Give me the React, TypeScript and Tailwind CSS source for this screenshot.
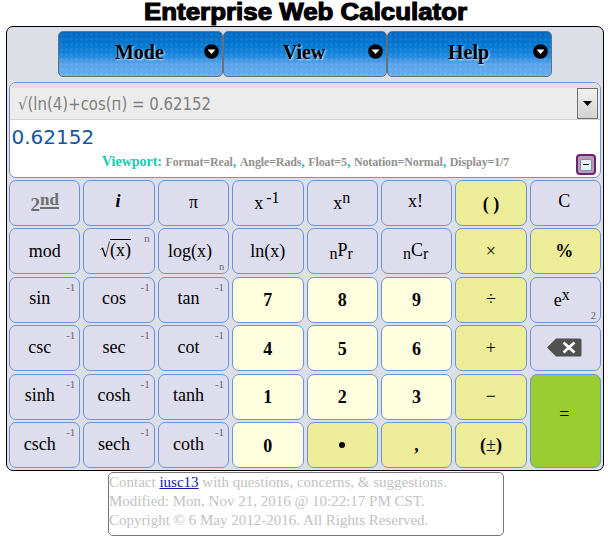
import { Fragment, type ReactNode } from "react";

type Tone = "func" | "digit" | "op" | "equals";

interface KeyDef {
  id: string;
  label: ReactNode;
  tone?: Tone;
  pad?: string;
  sup?: string;
  sub?: string;
}

const tones: Record<Tone, string> = {
  func: "bg-[#dddded]",
  digit: "bg-[#ffffdf] font-bold",
  op: "bg-[#eded99] font-bold",
  equals: "bg-[#9acd32] row-span-2",
};

const trig = (name: string): KeyDef => ({ id: name, label: name, sup: "-1", pad: "pr-[10px] pb-[3px]" });
const digit = (n: string): KeyDef => ({ id: n, label: n, tone: "digit", pad: "pt-px" });
const op = (id: string, sign: string): KeyDef => ({ id, label: <span className="font-normal">{sign}</span>, tone: "op", pad: "pb-px" });

const keys: KeyDef[] = [
  {
    id: "second",
    label: (
      <span className="flex font-bold text-[#6f6f6f]">
        <span className="pt-[3px] text-[19px]">2</span>
        <span className="h-[16px] border-b-2 border-[#6f6f6f] text-[17px] leading-[14px]">nd</span>
      </span>
    ),
    pad: "pt-px",
  },
  { id: "i", label: <b className="italic">i</b>, pad: "pr-[2px] pb-[3px]" },
  { id: "pi", label: "π", pad: "pb-[2px]" },
  { id: "inverse", label: <span className="flex">x<span className="-mt-[5px] pl-[3px] text-[16px]">-1</span></span>, pad: "pt-px pr-[2px]" },
  { id: "power", label: <span className="flex">x<span className="-mt-[5px] text-[16px]">n</span></span>, pad: "pr-px" },
  { id: "factorial", label: "x!", pad: "pb-[4px] pr-[2px]" },
  { id: "parens", label: "( )", tone: "op", pad: "pt-[3px]" },
  { id: "clear", label: "C", pad: "pb-[4px] pr-[2px]" },
  { id: "mod", label: "mod", pad: "pb-px" },
  {
    id: "root",
    label: (
      <span className="flex h-[18px] items-end">
        <svg className="h-[17px] w-[10px]" viewBox="0 0 10 17" fill="none" stroke="black">
          <path d="M0.5 8.5 2.5 7" strokeWidth="0.9" />
          <path d="m2.5 7 3 9" strokeWidth="1.3" />
          <path d="m5.5 16 4-15.500" strokeWidth="0.7" />
        </svg>
        <span className="h-[19px] border-t border-black leading-[20px]">(x)</span>
      </span>
    ),
    sup: "n",
    pad: "pr-[7px] pb-[4px]",
  },
  { id: "log", label: "log(x)", sub: "n", pad: "pr-[7px] pb-px" },
  { id: "ln", label: "ln(x)", pad: "pb-px" },
  { id: "npr", label: <span className="flex"><span className="pt-[4px] text-[16px]">n</span>P<span className="pt-[4px] text-[16px]">r</span></span>, pad: "pr-[2px] pt-[2px]" },
  { id: "ncr", label: <span className="flex"><span className="pt-[4px] text-[16px]">n</span>C<span className="pt-[4px] text-[16px]">r</span></span>, pad: "pr-[2px] pt-[2px]" },
  op("times", "×"),
  { id: "percent", label: "%", tone: "op", pad: "pr-[2px]" },
  trig("sin"), trig("cos"), trig("tan"),
  digit("7"), digit("8"), digit("9"),
  op("divide", "÷"),
  { id: "exp", label: <span className="flex">e<span className="-mt-[5px] text-[16px]">x</span></span>, sub: "2", pad: "pr-[7px]" },
  trig("csc"), trig("sec"), trig("cot"),
  digit("4"), digit("5"), digit("6"),
  op("plus", "+"),
  {
    id: "backspace",
    label: (
      <svg className="h-[19px] w-[36px]" viewBox="0 0 36 19">
        <path d="M1 9.5 10 0.5h24q1.5 0 1.500 1.500v15q0 1.500-1.500 1.500H10z" fill="#505050" />
        <path d="m17.500 4.500 11 10m0-10-11 10" stroke="white" strokeWidth="2.8" />
      </svg>
    ),
    pad: "pb-[2px] pr-[2px]",
  },
  trig("sinh"), trig("cosh"), trig("tanh"),
  digit("1"), digit("2"), digit("3"),
  op("minus", "−"),
  { id: "equals", label: "=", tone: "equals", pad: "pb-[14px] pr-[2px]" },
  trig("csch"), trig("sech"), trig("coth"),
  digit("0"),
  { id: "point", label: <span className="block h-[6px] w-[6px] rounded-full bg-black" />, tone: "op", pad: "pr-px pb-px" },
  { id: "comma", label: ",", tone: "op" },
  { id: "sign", label: <>(<span className="font-normal">±</span>)</>, tone: "op" },
];

function Key({ def }: { def: KeyDef }) {
  return (
    <button
      className={`relative flex items-center justify-center rounded-[7px] border border-[#6b93dc] text-[18px] leading-[18px] text-black ${tones[def.tone ?? "func"]} ${def.pad ?? ""}`}
    >
      {def.label}
      {def.sup && <span className="absolute top-[3px] right-[4px] text-[11px] leading-[12px] text-[#666]">{def.sup}</span>}
      {def.sub && <span className="absolute right-[4px] bottom-0 text-[10.5px] leading-[12px] text-[#666]">{def.sub}</span>}
    </button>
  );
}

function MenuButton({ label }: { label: string }) {
  return (
    <button className="relative h-[46px] w-[164.6px] rounded-[5px] border border-[#66717c] bg-[radial-gradient(circle,rgba(255,255,255,0.07)_0_1px,transparent_2px),linear-gradient(#0369c2,#0478d2_30%,#1a86de_52%,#59a2e8_72%,#66adf0)] bg-size-[5px_5px,100%_100%] text-[20px] leading-[38px] font-bold text-black [text-shadow:1px_1px_2px_#d5eaff]">
      <span className="block pr-[2px] pb-[5px]">{label}</span>
      <svg className="absolute top-[12px] right-[3px] h-[15px] w-[15px]" viewBox="0 0 15 15">
        <circle cx="7.5" cy="7.5" r="7.3" />
        <path d="M3.5 5.5h8l-4 4.5z" fill="white" />
      </svg>
    </button>
  );
}

const settings = ["Format=Real", "Angle=Rads", "Float=5", "Notation=Normal", "Display=1/7"];

export default function App() {
  return (
    <main className="h-[540px] w-[608px] overflow-hidden bg-white pl-[6px] font-['Liberation_Serif',serif]">
      <h1 className="flex h-[26px] w-[600px] justify-center">
        <span className="origin-center scale-x-[1.125] font-['Liberation_Sans',sans-serif] text-[23px] leading-[24px] font-bold whitespace-nowrap text-black [-webkit-text-stroke:1.1px_black]">
          Enterprise Web Calculator
        </span>
      </h1>

      <section className="flex h-[445px] w-[598px] flex-col rounded-[7px] border border-black bg-[#dce0e6] px-[2px]">
        <nav className="mt-[4px] flex justify-center">
          <MenuButton label="Mode" />
          <MenuButton label="View" />
          <MenuButton label="Help" />
        </nav>

        <div className="mt-[5px] flex h-[96px] shrink-0 flex-col overflow-hidden rounded-[7px] border border-[#7391d6] bg-white">
          <div className="flex h-[37px] shrink-0 items-end justify-between border-t-[5px] border-b border-t-[#dce0df] border-b-[#d5d5d5] bg-[#ececec] pr-[2px] pl-[8px] font-['DejaVu_Sans_Condensed','DejaVu_Sans',sans-serif]">
            <svg className="h-[31px] w-[200px]">
              <text x="0" y="22" fontSize="17" fill="#808080" textLength="193" lengthAdjust="spacingAndGlyphs">√(ln(4)+cos(п) = 0.62152</text>
            </svg>
            <span className="flex h-[31px] w-[21px] items-center justify-center border border-[#707070] bg-linear-to-b from-[#f2f2f2] to-[#d2d2d2]">
              <svg className="h-[5px] w-[9px]" viewBox="0 0 9 5"><path d="M0 0h9L4.500 5z" /></svg>
            </span>
          </div>
          <div className="h-[34px] pt-[5px] pl-[1.500px] font-['DejaVu_Sans',sans-serif] text-[20px] leading-[24px] text-[#15559f]">0.62152</div>
          <div className="flex pl-[92px] font-bold">
            <p className="text-[14px] leading-[16px] tracking-[-0.02px] whitespace-nowrap text-[#19c9b4]">
              Viewport:{" "}
              {settings.map((text, i) => (
                <Fragment key={text}>
                  {i > 0 && ", "}
                  <span className="text-[12px] tracking-[-0.13px] text-[#919191]">{text}</span>
                </Fragment>
              ))}
            </p>
            <button className="mr-[4px] ml-auto flex h-[21px] w-[20px] shrink-0 items-center justify-center rounded-[4px] border-2 border-[#70226f] bg-[#b2a0b5]">
              <span className="flex h-[12px] w-[12px] items-center justify-center rounded-[2px] border border-[#7396b5] bg-[#e8eff5]">
                <span className="h-px w-[6px] bg-black" />
              </span>
            </button>
          </div>
        </div>

        <div className="mt-[2px] grid h-[288px] shrink-0 grid-cols-8 grid-rows-6 gap-x-[3px] gap-y-[2.5px]">
          {keys.map((def) => <Key key={def.id} def={def} />)}
        </div>
      </section>

      <footer className="mt-px ml-[102px] h-[64px] w-[396px] rounded-[5px] border border-[#777] text-[15px] leading-[19px] text-[#c2c2c2]">
        <p>Contact <a className="text-[#1515aa] underline" href="#contact">iusc13</a> with questions, concerns, &amp; suggestions.</p>
        <p>Modified: Mon, Nov 21, 2016 @ 10:22:17 PM CST.</p>
        <p>Copyright © 6 May 2012-2016. All Rights Reserved.</p>
      </footer>
    </main>
  );
}
